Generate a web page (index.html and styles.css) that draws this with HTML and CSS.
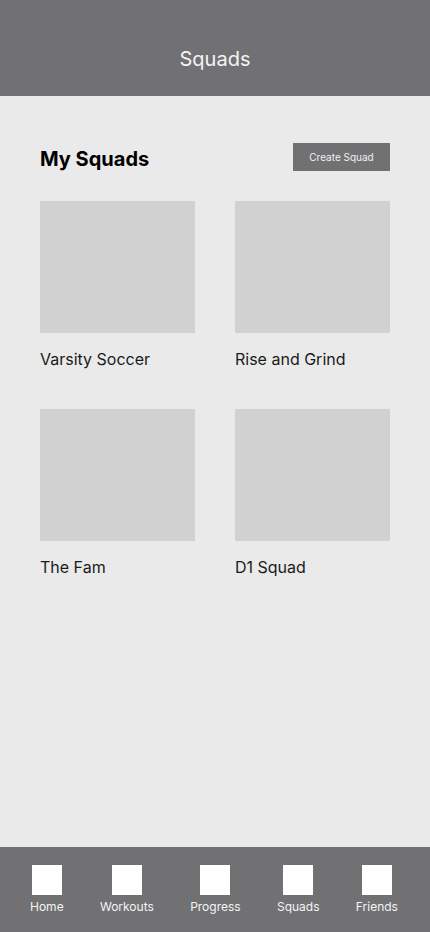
FILE: index.html
```html
<!DOCTYPE html>
<html lang="en">
<head>
<meta charset="utf-8">
<title>Squads</title>
<link rel="stylesheet" href="styles.css">
</head>
<body>
<div class="app">
  <header class="topbar"><h1 class="topbar-title">Squads</h1></header>
  <main class="content">
    <div class="section-head">
      <h2 class="section-title">My Squads</h2>
      <button class="create-btn">Create Squad</button>
    </div>
    <div class="squad-grid">
      <div class="squad"><div class="squad-img"></div><div class="squad-name">Varsity Soccer</div></div>
      <div class="squad"><div class="squad-img"></div><div class="squad-name">Rise and Grind</div></div>
      <div class="squad"><div class="squad-img"></div><div class="squad-name">The Fam</div></div>
      <div class="squad"><div class="squad-img"></div><div class="squad-name">D1 Squad</div></div>
    </div>
  </main>
  <nav class="tabbar">
    <div class="tab"><span class="tab-icon"></span><span class="tab-label">Home</span></div>
    <div class="tab"><span class="tab-icon"></span><span class="tab-label">Workouts</span></div>
    <div class="tab"><span class="tab-icon"></span><span class="tab-label">Progress</span></div>
    <div class="tab"><span class="tab-icon"></span><span class="tab-label">Squads</span></div>
    <div class="tab"><span class="tab-icon"></span><span class="tab-label">Friends</span></div>
  </nav>
</div>
</body>
</html>
```
FILE: styles.css
```css
* { box-sizing: border-box; }
html, body { margin: 0; padding: 0; }
body {
  font-family: Inter, "Noto Sans", sans-serif;
  background: #eaeaea;
}
.app {
  width: 430px;
  height: 932px;
  display: flex;
  flex-direction: column;
  background: #eaeaea;
}
.topbar {
  height: 96px;
  background: #717173;
  display: flex;
  align-items: flex-end;
  justify-content: center;
  padding-bottom: 25px;
}
.topbar-title {
  margin: 0;
  font-size: 20px;
  font-weight: 400;
  line-height: 24px;
  color: #f4f4f4;
}
.content {
  flex: 1;
  padding: 47px 40px 0;
}
.section-head {
  display: flex;
  align-items: center;
  justify-content: space-between;
  height: 28px;
}
.section-title {
  margin: 0;
  font-size: 20px;
  font-weight: 700;
  line-height: 24px;
  color: #000;
  padding-top: 4px;
}
.create-btn {
  width: 97px;
  height: 28px;
  border: 0;
  background: #717173;
  color: #f0f0f0;
  font-family: Inter, "Noto Sans", sans-serif;
  font-size: 10px;
  padding: 0;
}
.squad-grid {
  margin-top: 30px;
  display: grid;
  grid-template-columns: 155px 155px;
  column-gap: 40px;
  row-gap: 40px;
}
.squad-img {
  height: 132px;
  background: #d1d1d1;
}
.squad-name {
  margin-top: 16px;
  font-size: 16px;
  line-height: 20px;
  color: #1a1a1a;
}
.tabbar {
  height: 85px;
  background: #717173;
  display: flex;
  justify-content: space-between;
  padding: 18px 32px 0 30px;
}
.tab {
  display: flex;
  flex-direction: column;
  align-items: center;
}
.tab-icon {
  width: 30px;
  height: 30px;
  background: #fff;
}
.tab-label {
  margin-top: 4px;
  font-size: 12px;
  line-height: 16px;
  color: #f4f4f4;
}
```
